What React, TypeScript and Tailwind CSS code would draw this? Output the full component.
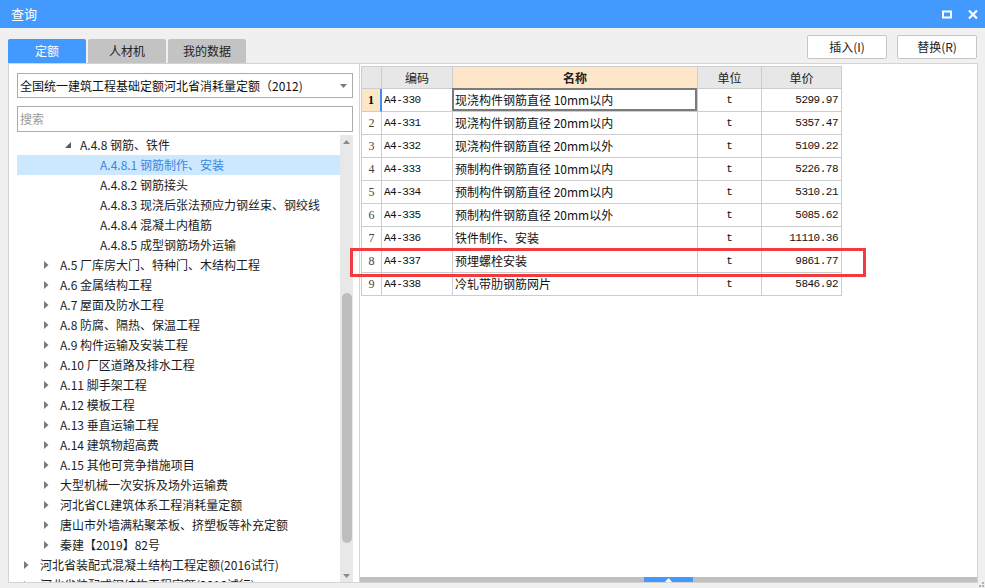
import React from "react"

type Node = { level: 1 | 2 | 3 | 4; label: string; state?: "open" | "closed"; selected?: boolean }

const tree: Node[] = [
  { level: 3, label: "A.4.8 钢筋、铁件", state: "open" },
  { level: 4, label: "A.4.8.1 钢筋制作、安装", selected: true },
  { level: 4, label: "A.4.8.2 钢筋接头" },
  { level: 4, label: "A.4.8.3 现浇后张法预应力钢丝束、钢绞线" },
  { level: 4, label: "A.4.8.4 混凝土内植筋" },
  { level: 4, label: "A.4.8.5 成型钢筋场外运输" },
  { level: 2, label: "A.5 厂库房大门、特种门、木结构工程", state: "closed" },
  { level: 2, label: "A.6 金属结构工程", state: "closed" },
  { level: 2, label: "A.7 屋面及防水工程", state: "closed" },
  { level: 2, label: "A.8 防腐、隔热、保温工程", state: "closed" },
  { level: 2, label: "A.9 构件运输及安装工程", state: "closed" },
  { level: 2, label: "A.10 厂区道路及排水工程", state: "closed" },
  { level: 2, label: "A.11 脚手架工程", state: "closed" },
  { level: 2, label: "A.12 模板工程", state: "closed" },
  { level: 2, label: "A.13 垂直运输工程", state: "closed" },
  { level: 2, label: "A.14 建筑物超高费", state: "closed" },
  { level: 2, label: "A.15 其他可竞争措施项目", state: "closed" },
  { level: 2, label: "大型机械一次安拆及场外运输费", state: "closed" },
  { level: 2, label: "河北省CL建筑体系工程消耗量定额", state: "closed" },
  { level: 2, label: "唐山市外墙满粘聚苯板、挤塑板等补充定额", state: "closed" },
  { level: 2, label: "秦建【2019】82号", state: "closed" },
  { level: 1, label: "河北省装配式混凝土结构工程定额(2016试行)", state: "closed" },
  { level: 1, label: "河北省装配式钢结构工程定额(2016试行)", state: "closed" },
]

const rows = [
  ["1", "A4-330", "现浇构件钢筋直径 10mm以内", "t", "5299.97"],
  ["2", "A4-331", "现浇构件钢筋直径 20mm以内", "t", "5357.47"],
  ["3", "A4-332", "现浇构件钢筋直径 20mm以外", "t", "5109.22"],
  ["4", "A4-333", "预制构件钢筋直径 10mm以内", "t", "5226.78"],
  ["5", "A4-334", "预制构件钢筋直径 20mm以内", "t", "5310.21"],
  ["6", "A4-335", "预制构件钢筋直径 20mm以外", "t", "5085.62"],
  ["7", "A4-336", "铁件制作、安装", "t", "11110.36"],
  ["8", "A4-337", "预埋螺栓安装", "t", "9861.77"],
  ["9", "A4-338", "冷轧带肋钢筋网片", "t", "5846.92"],
]

const indent = { 1: "pl-[7px]", 2: "pl-[27px]", 3: "pl-[47px]", 4: "pl-[67px]" }

function TreeRow({ node }: { node: Node }) {
  return (
    <div
      className={`flex h-[20px] shrink-0 items-center whitespace-nowrap text-[12px] ${indent[node.level]} ${
        node.selected ? "bg-[#cce8ff] text-[#3a86de]" : "text-[#1c1c1c]"
      }`}
    >
      <div className="flex w-[16px] shrink-0 items-center">
        {node.state === "closed" && (
          <svg width="5" height="8" viewBox="0 0 5 8">
            <polygon points="0,0 4.5,4 0,8" fill="#7a7a7a" />
          </svg>
        )}
        {node.state === "open" && (
          <svg width="7" height="7" viewBox="0 0 7 7" className="ml-[1px]">
            <polygon points="6,0 6,6 0,6" fill="#5a5a5a" />
          </svg>
        )}
      </div>
      <span>{node.label}</span>
    </div>
  )
}

export default function App() {
  return (
    <div className="relative flex h-[588px] w-[985px] flex-col overflow-hidden bg-[#f0f0f0] [font-family:'Noto_Sans_CJK_SC',sans-serif]">
      {/* title bar */}
      <div className="flex h-[28px] shrink-0 items-center bg-[#4299fe] pl-[11px] pr-[7px] text-white">
        <span className="text-[13px]">查询</span>
        <div className="ml-auto flex items-center gap-[16px]">
          <svg width="10" height="9" viewBox="0 0 10 9">
            <rect x="1" y="1.5" width="8" height="6" fill="none" stroke="white" strokeWidth="2" />
          </svg>
          <svg width="10" height="9" viewBox="0 0 10 9">
            <path d="M1 0.5 L9 8.5 M9 0.5 L1 8.5" stroke="white" strokeWidth="2.2" />
          </svg>
        </div>
      </div>

      {/* tabs + buttons */}
      <div className="flex h-[35px] shrink-0 items-end px-[8px]">
        <div className="flex gap-[2px] text-[12px]">
          <div className="flex h-[24px] w-[78px] items-center justify-center rounded-t-[2px] bg-[#4299fe] text-white">定额</div>
          <div className="flex h-[24px] w-[78px] items-center justify-center rounded-t-[2px] bg-[#c3c3c3] text-[#222]">人材机</div>
          <div className="flex h-[24px] w-[78px] items-center justify-center rounded-t-[2px] bg-[#c3c3c3] text-[#222]">我的数据</div>
        </div>
        <div className="mb-[4px] ml-auto flex gap-[10px] self-end text-[12px] text-[#222]">
          <div className="flex h-[24px] w-[80px] items-center justify-center rounded-[2px] border border-[#c6c6c6] bg-white">插入(I)</div>
          <div className="flex h-[24px] w-[80px] items-center justify-center rounded-[2px] border border-[#c6c6c6] bg-white">替换(R)</div>
        </div>
      </div>

      {/* main area */}
      <div className="ml-[8px] flex h-[520px] w-[970px] shrink-0 border border-[#d4d4d4] bg-white">
        {/* left */}
        <div className="flex w-[350px] shrink-0 flex-col pl-[8px] pr-[6px] pt-[9px]">
          <div className="flex h-[25px] shrink-0 items-center border border-[#acacac] pl-[2px] pr-[5px] text-[12px] text-[#111]">
            <span className="whitespace-nowrap">全国统一建筑工程基础定额河北省消耗量定额（2012)</span>
            <svg width="7" height="4" viewBox="0 0 7 4" className="ml-auto">
              <polygon points="0,0 7,0 3.5,4" fill="#7a7a7a" />
            </svg>
          </div>
          <div className="mt-[8px] flex h-[26px] shrink-0 items-center border border-[#acacac] pl-[2px] text-[12px] text-[#9a9a9a]">
            搜索
          </div>
          <div className="mt-[3px] flex min-h-0 flex-1">
            <div className="flex min-w-0 flex-1 flex-col overflow-hidden">
              {tree.map((n, i) => (
                <TreeRow key={i} node={n} />
              ))}
            </div>
            <div className="flex w-[13px] shrink-0 flex-col bg-[#e8e8e8]">
              <div className="flex h-[14px] shrink-0 items-center justify-center">
                <svg width="7" height="4" viewBox="0 0 7 4">
                  <polygon points="0,4 7,4 3.5,0" fill="#8a8a8a" />
                </svg>
              </div>
              <div className="h-[144px] shrink-0" />
              <div className="ml-[2px] h-[250px] w-[10px] shrink-0 rounded-full bg-[#bebebe]" />
              <div className="flex-1" />
              <div className="flex h-[12px] shrink-0 items-center justify-center">
                <svg width="7" height="4" viewBox="0 0 7 4">
                  <polygon points="0,0 7,0 3.5,4" fill="#8a8a8a" />
                </svg>
              </div>
            </div>
          </div>
        </div>

        {/* right */}
        <div className="flex min-w-0 flex-1 flex-col border-l border-[#d4d4d4]">
          <div className="min-h-0 flex-1 pl-[1px] pt-[2px]">
            <div className="w-[481px] border-l border-t border-[#cdcdcd] text-[12px]">
              <div className="grid h-[22px] grid-cols-[20px_71px_245px_64px_80px] text-[#222]">
                <div className="border-b border-r border-[#cdcdcd] bg-[#e7e7e7]" />
                <div className="flex items-center justify-center border-b border-r border-[#cdcdcd] bg-[#e7e7e7]">编码</div>
                <div className="flex items-center justify-center border-b border-r border-[#cdcdcd] bg-[#fee6c9] font-bold">名称</div>
                <div className="flex items-center justify-center border-b border-r border-[#cdcdcd] bg-[#e7e7e7]">单位</div>
                <div className="flex items-center justify-center border-b border-r border-[#cdcdcd] bg-[#e7e7e7]">单价</div>
              </div>
              {rows.map((r, i) => (
                <div key={i} className="grid h-[23px] grid-cols-[20px_71px_245px_64px_80px] text-[#111]">
                  <div
                    className={`flex items-center justify-center border-b border-[#cdcdcd] text-[12px] [font-family:'Liberation_Serif',serif] ${
                      i === 0 ? "border-r-2 border-r-[#3d8ef0] bg-[#fee6c9] font-bold text-black" : "border-r text-[#444]"
                    }`}
                  >
                    {r[0]}
                  </div>
                  <div className="flex items-center border-b border-r border-[#cdcdcd] pl-[2px] text-[11px] tracking-[-0.5px] [font-family:'Liberation_Mono',monospace]">
                    {r[1]}
                  </div>
                  <div className="relative flex items-center whitespace-nowrap border-b border-r border-[#cdcdcd] pl-[2px]">
                    {r[2]}
                    {i === 0 && <div className="absolute -left-[1px] -top-[1px] bottom-0 right-0 border-2 border-[#7b7b7b]" />}
                  </div>
                  <div className="flex items-center justify-center border-b border-r border-[#cdcdcd] text-[11px] [font-family:'Liberation_Mono',monospace]">
                    {r[3]}
                  </div>
                  <div className="flex items-center justify-end border-b border-r border-[#cdcdcd] pr-[3px] text-[11px] tracking-[-0.5px] [font-family:'Liberation_Mono',monospace]">
                    {r[4]}
                  </div>
                </div>
              ))}
            </div>
          </div>
          <div className="flex h-[5px] shrink-0 bg-[#c0c0c0]">
            <div className="w-[284px] shrink-0" />
            <div className="flex w-[49px] shrink-0 items-center justify-center bg-[#4299fe]">
              <svg width="7" height="4" viewBox="0 0 7 4">
                <polygon points="0,4 7,4 3.5,0" fill="white" />
              </svg>
            </div>
          </div>
        </div>
      </div>

      {/* resize grip */}
      <div className="absolute bottom-[1px] right-[1px] grid grid-cols-2 gap-[1px]">
        <div />
        <div className="h-[2px] w-[2px] bg-[#b0b0b0]" />
        <div className="h-[2px] w-[2px] bg-[#b0b0b0]" />
        <div className="h-[2px] w-[2px] bg-[#b0b0b0]" />
      </div>

      {/* annotation */}
      <div className="absolute left-[350px] top-[248px] h-[29px] w-[516px] border-[3px] border-[#f33a3c]" />
    </div>
  )
}
